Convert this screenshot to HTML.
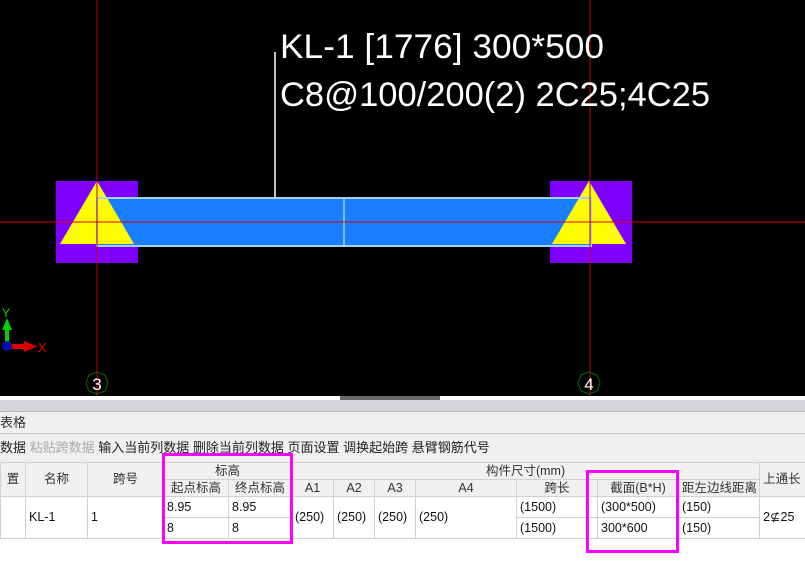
<!DOCTYPE html>
<html><head><meta charset="utf-8"><style>
html,body{margin:0;padding:0;width:805px;height:571px;overflow:hidden;background:#fff;font-family:"Liberation Sans","Noto Sans CJK SC",sans-serif;}
#cv{position:absolute;left:0;top:0;width:805px;height:396px;background:#000}
.abs{position:absolute}
table{border-collapse:collapse;position:absolute;left:0;top:462px;table-layout:fixed;width:819px;font-size:12px;color:#111}
td{border:1px solid #d0d0d0;padding:0 3px;white-space:nowrap;overflow:hidden;box-sizing:border-box}
.h td{background:#f0f0f0;text-align:center;color:#333;font-size:12.5px;height:17px;line-height:15px}
.d td{background:#fff;height:21px;line-height:19px;font-size:12.5px}
</style></head><body>
<div id="cv">
<svg width="805" height="396" style="position:absolute;left:0;top:0">
<rect x="56" y="181" width="82" height="82" fill="#8000ff"/>
<rect x="550" y="181" width="82" height="82" fill="#8000ff"/>
<rect x="97" y="198" width="494" height="48" fill="#1a7fff"/>
<polygon points="97,181 60,244 134,244" fill="#ffff00"/>
<polygon points="589,181 552,244 626,244" fill="#ffff00"/>
<rect x="97" y="198" width="494" height="48" fill="none" stroke="#a8d0ff" stroke-width="2"/>
<line x1="344" y1="198" x2="344" y2="246" stroke="#a8d0ff" stroke-width="1.5"/>
<line x1="97" y1="0" x2="97" y2="396" stroke="#c00000" stroke-width="1"/>
<line x1="590" y1="0" x2="590" y2="396" stroke="#c00000" stroke-width="1"/>
<line x1="0" y1="222" x2="805" y2="222" stroke="#e00000" stroke-width="1"/>
<line x1="275" y1="52" x2="275" y2="197" stroke="#fff" stroke-width="1.5"/>
<text x="280" y="58" fill="#fff" font-size="34" textLength="324" lengthAdjust="spacingAndGlyphs" font-family="Liberation Sans">KL-1 [1776] 300*500</text>
<text x="280" y="106" fill="#fff" font-size="34" textLength="430" lengthAdjust="spacingAndGlyphs" font-family="Liberation Sans">C8@100/200(2) 2C25;4C25</text>
<polygon points="97,372 105,375 108,383 105,391 97,394 89,391 86,383 89,375" fill="none" stroke="#0a6a0a"/>
<polygon points="589,372 597,375 600,383 597,391 589,394 581,391 578,383 581,375" fill="none" stroke="#0a6a0a"/>
<text x="97" y="390" fill="#fff" font-size="17" text-anchor="middle">3</text>
<text x="589" y="390" fill="#fff" font-size="17" text-anchor="middle">4</text>
<rect x="5" y="326" width="4" height="20" fill="#00d000"/>
<polygon points="2,330 7,318 12,330" fill="#00d000"/>
<text x="2" y="317" fill="#00e000" font-size="12">Y</text>
<rect x="7" y="344" width="18" height="5" fill="#e00000"/>
<polygon points="24,341 37,346.5 24,352" fill="#e00000"/>
<text x="38" y="352" fill="#e00000" font-size="13">X</text>
<circle cx="7" cy="346" r="5" fill="#0010b0"/>
</svg>
</div>
<div class="abs" style="left:0;top:396px;width:805px;height:4px;background:#fff"></div>
<div class="abs" style="left:340px;top:396px;width:100px;height:4px;background:#6a6a6a"></div>
<div class="abs" style="left:0;top:400px;width:805px;height:11px;background:#d5d6da;border-bottom:1px solid #bbb"></div>
<div class="abs" style="left:0;top:412px;width:805px;height:21px;background:#f0f0f0;border-bottom:1px solid #ccc;font-size:13px;line-height:21px;color:#333">表格</div>
<div class="abs" style="left:0;top:434px;width:805px;height:28px;background:#f0f0f0;font-size:13px;line-height:28px;color:#222;white-space:nowrap">数据 <span style="color:#aaa">粘贴跨数据</span> 输入当前列数据 删除当前列数据 页面设置 调换起始跨 悬臂钢筋代号</div>
<table>
<colgroup><col style="width:25px"><col style="width:62px"><col style="width:76px"><col style="width:65px"><col style="width:63px"><col style="width:42px"><col style="width:41px"><col style="width:41px"><col style="width:101px"><col style="width:81px"><col style="width:81px"><col style="width:81px"><col style="width:60px"></colgroup>
<tr class="h"><td rowspan="2">置</td><td rowspan="2">名称</td><td rowspan="2">跨号</td><td colspan="2">标高</td><td colspan="7">构件尺寸(mm)</td><td rowspan="2" style="text-align:left">上通长</td></tr>
<tr class="h"><td>起点标高</td><td>终点标高</td><td>A1</td><td>A2</td><td>A3</td><td>A4</td><td>跨长</td><td>截面(B*H)</td><td>距左边线距离</td></tr>
<tr class="d"><td rowspan="2"></td><td rowspan="2">KL-1</td><td rowspan="2">1</td><td>8.95</td><td>8.95</td><td rowspan="2">(250)</td><td rowspan="2">(250)</td><td rowspan="2">(250)</td><td rowspan="2">(250)</td><td>(1500)</td><td>(300*500)</td><td>(150)</td><td rowspan="2">2⊈25</td></tr>
<tr class="d"><td>8</td><td>8</td><td>(1500)</td><td>300*600</td><td>(150)</td></tr>
</table>
<div class="abs" style="left:162px;top:453px;width:125px;height:85px;border:3px solid #ff00ff"></div>
<div class="abs" style="left:586px;top:470px;width:87px;height:77px;border:3px solid #ff00ff"></div>
</body></html>
